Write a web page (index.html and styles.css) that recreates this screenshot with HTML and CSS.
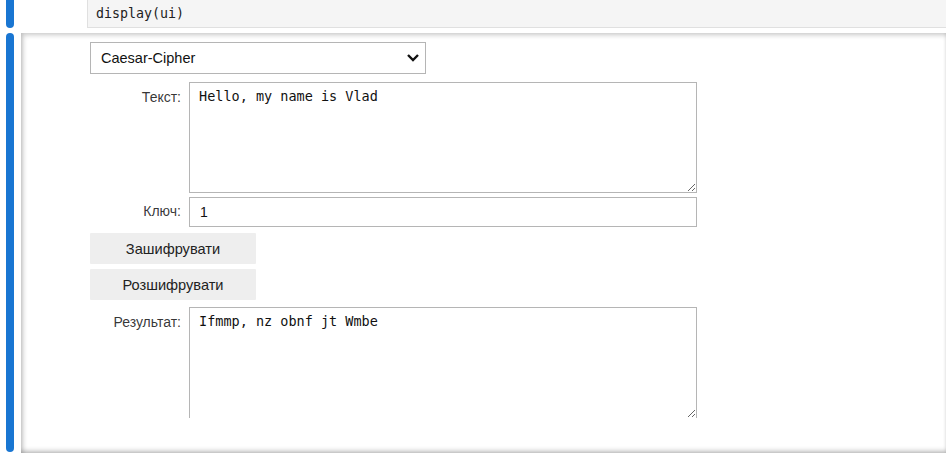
FILE: index.html
```html
<!DOCTYPE html>
<html>
<head>
<meta charset="utf-8">
<link rel="stylesheet" href="styles.css">
</head>
<body>
<div class="page">
  <div class="cell cell-code">
    <div class="bar bar-top"></div>
    <div class="code">display(ui)</div>
  </div>
  <div class="cell cell-out">
    <div class="bar bar-full"></div>
    <div class="card">
      <div class="widgets">
        <div class="select">
          <span>Caesar-Cipher</span>
          <svg class="chev" width="14" height="10" viewBox="0 0 14 10"><path d="M2 2 L7 7 L12 2" fill="none" stroke="#111" stroke-width="2.4"/></svg>
        </div>
        <div class="row row-text">
          <label class="lbl">Текст:</label>
          <textarea class="area" readonly>Hello, my name is Vlad</textarea>
        </div>
        <div class="row row-key">
          <label class="lbl">Ключ:</label>
          <div class="input">1</div>
        </div>
        <div class="btn btn-first">Зашифрувати</div>
        <div class="btn btn-second">Розшифрувати</div>
        <div class="row row-res">
          <label class="lbl">Результат:</label>
          <div class="clip"><textarea class="area" readonly>Ifmmp, nz obnf jt Wmbe</textarea></div>
        </div>
      </div>
    </div>
  </div>
</div>
</body>
</html>
```
FILE: styles.css
```css
html, body {
  margin: 0;
  padding: 0;
  width: 946px;
  height: 453px;
  overflow: hidden;
  background: #fff;
}
.page {
  display: flex;
  flex-direction: column;
  gap: 5px;
  height: 453px;
}
.cell {
  display: flex;
  flex-direction: row;
}
.cell-code {
  height: 28px;
}
.bar {
  width: 8px;
  margin-left: 6px;
  background: #1976d2;
  flex: none;
}
.bar-top {
  border-radius: 0 0 4px 4px;
}
.bar-full {
  border-radius: 4px;
  height: 419px;
}
.code {
  margin-left: 73px;
  flex: 1;
  background: #f5f5f5;
  border-left: 1px solid #e0e0e0;
  border-bottom: 1px solid #e0e0e0;
  font-family: "DejaVu Sans Mono", monospace;
  font-size: 13.3px;
  color: #222;
  padding: 6px 0 0 8px;
  box-sizing: border-box;
}
.cell-out {
  height: 420px;
}
.card {
  margin-left: 7px;
  width: 940px;
  height: 420px;
  background: #fff;
  box-shadow: inset 2px 2px 5px rgba(0,0,0,0.22), inset 0 -4px 5px -2px rgba(0,0,0,0.25);
  overflow: hidden;
}
.widgets {
  padding: 9px 0 0 69px;
  display: flex;
  flex-direction: column;
  font-family: "Liberation Sans", Arial, sans-serif;
  font-size: 14px;
  color: rgba(0,0,0,0.8);
}
.select {
  width: 336px;
  height: 32px;
  box-sizing: border-box;
  border: 1px solid #b5b5b5;
  display: flex;
  align-items: center;
  justify-content: space-between;
  padding: 0 5px 0 10px;
  color: #111;
  font-size: 14.5px;
}
.chev {
  display: block;
}
.row {
  display: flex;
  flex-direction: row;
  align-items: flex-start;
}
.lbl {
  width: 91px;
  margin-right: 8px;
  text-align: right;
  padding-top: 7px;
  flex: none;
}
.row-text {
  margin-top: 8px;
}
.area {
  width: 508px;
  height: 111px;
  box-sizing: border-box;
  border: 1px solid #b5b5b5;
  margin: 0;
  padding: 5px 9px;
  font-family: "DejaVu Sans Mono", monospace;
  font-size: 13.5px;
  color: #111;
  resize: vertical;
  outline: none;
  display: block;
}
.row-key {
  margin-top: 4px;
}
.row-key .lbl {
  padding-top: 6px;
}
.input {
  width: 508px;
  height: 30px;
  box-sizing: border-box;
  border: 1px solid #b5b5b5;
  padding: 6px 10px;
  color: #111;
}
.btn {
  width: 166px;
  height: 31px;
  background: #eeeeee;
  display: flex;
  align-items: center;
  justify-content: center;
  color: #222;
  border-radius: 1px;
  font-size: 14.6px;
}
.btn-first {
  margin-top: 6px;
}
.btn-second {
  margin-top: 5px;
}
.row-res {
  margin-top: 7px;
}
.clip {
  height: 111px;
  overflow: hidden;
}
.row-res .area {
  height: 112px;
}
```
